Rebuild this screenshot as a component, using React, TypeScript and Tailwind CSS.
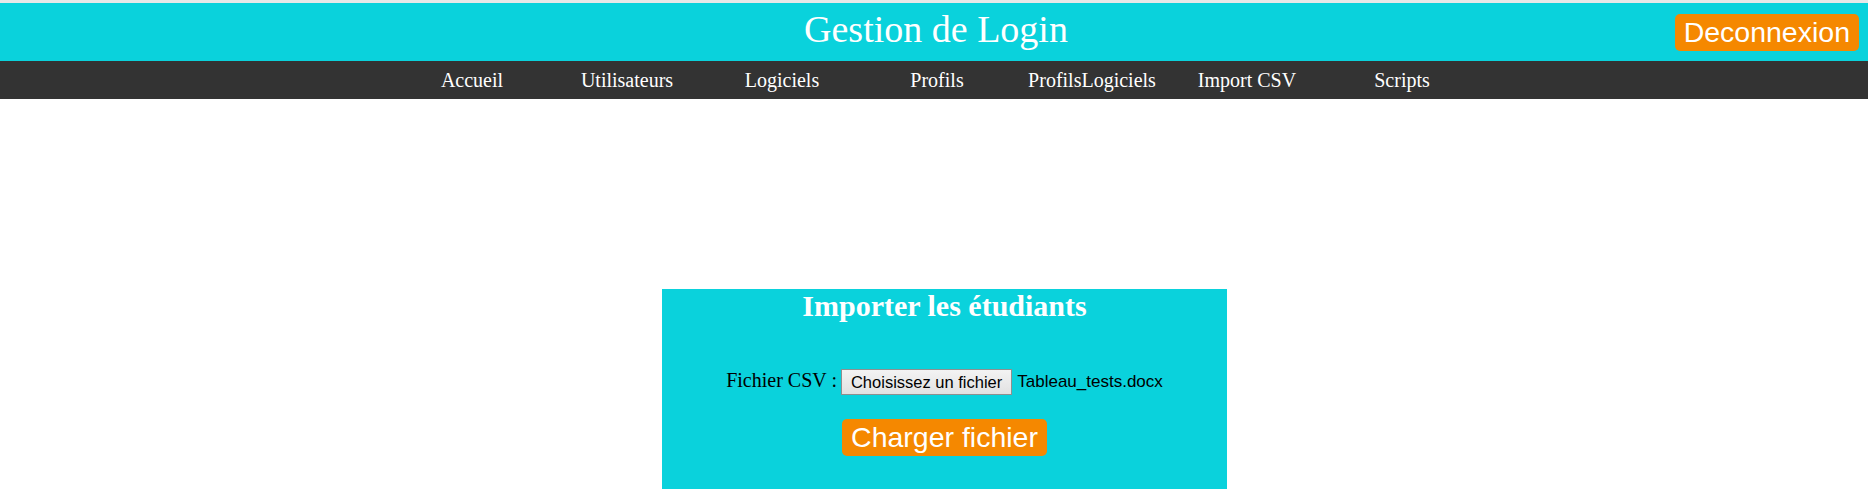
const navItems = ['Accueil', 'Utilisateurs', 'Logiciels', 'Profils', 'ProfilsLogiciels', 'Import CSV', 'Scripts'];

export default function App() {
  return (
    <div className="min-h-[499px] bg-white font-['Liberation_Serif','Times_New_Roman',serif]">
      <div className="h-[3px] bg-[#e8e8e8]" />

      <header className="relative h-[58px] bg-[#0ad2dc]">
        <h1 className="pl-[4px] pt-[5px] text-center text-[38px] leading-[42px] font-normal text-white">Gestion de Login</h1>
        <button className="absolute right-[9px] top-[11px] rounded-[5px] bg-[#f58800] px-[9px] py-[2px] font-['Liberation_Sans',Arial,sans-serif] text-[28.5px] leading-[33px] text-white">
          Deconnexion
        </button>
      </header>

      <nav className="flex h-[38px] items-center justify-center bg-[#333333] pl-[6px]">
        {navItems.map((item) => (
          <a key={item} className="w-[155px] text-center text-[20px] leading-[22px] text-white">
            {item}
          </a>
        ))}
      </nav>

      <div className="mt-[190px] flex justify-center pl-[21px]">
        <section className="flex h-[200px] w-[565px] flex-col items-center bg-[#0ad2dc]">
          <h2 className="text-center text-[30px] leading-[33px] font-bold text-white">Importer les étudiants</h2>

          <div className="mt-[47px] flex items-center">
            <span className="mb-[4px] text-[20px] leading-[22px] text-black">Fichier CSV :</span>
            <span className="ml-[4px] flex h-[26px] items-center border border-[#8f8f8f] bg-gradient-to-b from-[#f3f3f3] to-[#e2e2e2] px-[9px] font-['Liberation_Sans',Arial,sans-serif] text-[16.5px] text-black">
              Choisissez un fichier
            </span>
            <span className="ml-[5px] font-['Liberation_Sans',Arial,sans-serif] text-[17px] text-black">Tableau_tests.docx</span>
          </div>

          <button className="mt-[24px] rounded-[5px] bg-[#f58800] px-[9px] py-[2px] font-['Liberation_Sans',Arial,sans-serif] text-[28.5px] leading-[33px] text-white">
            Charger fichier
          </button>
        </section>
      </div>
    </div>
  );
}
